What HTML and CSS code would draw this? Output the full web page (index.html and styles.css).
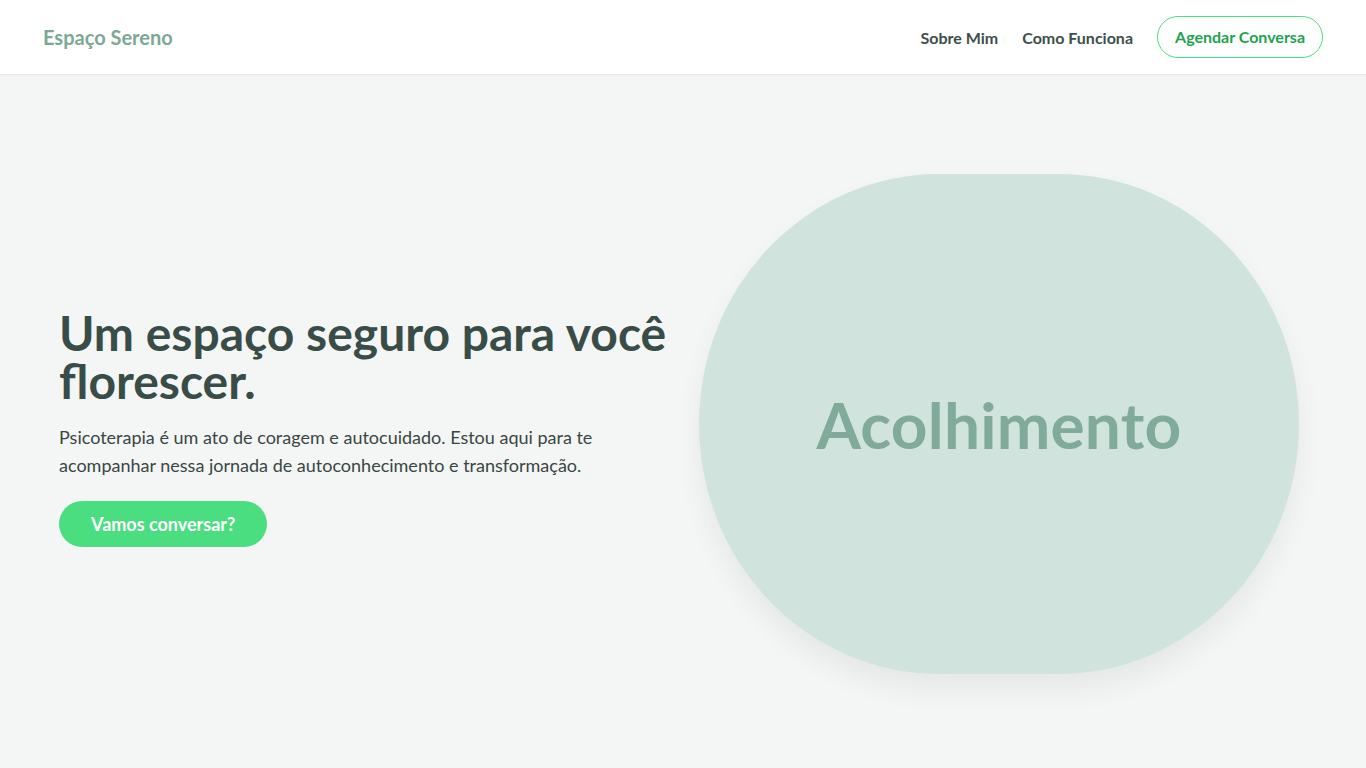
FILE: index.html
```html
<!DOCTYPE html>
<html lang="pt-BR">
<head>
<meta charset="utf-8">
<title>Espaço Sereno</title>
<link rel="stylesheet" href="styles.css">
</head>
<body>
<header class="site-header">
  <div class="container header-inner">
    <a class="logo" href="#">Espaço Sereno</a>
    <nav class="nav">
      <a class="nav-link" href="#">Sobre Mim</a>
      <a class="nav-link" href="#">Como Funciona</a>
      <a class="nav-cta" href="#">Agendar Conversa</a>
    </nav>
  </div>
</header>
<main class="hero">
  <div class="container hero-inner">
    <div class="hero-text">
      <h1 class="hero-title">Um espaço seguro para você florescer.</h1>
      <p class="hero-lead">Psicoterapia é um ato de coragem e autocuidado. Estou aqui para te acompanhar nessa jornada de autoconhecimento e transformação.</p>
      <a class="hero-btn" href="#">Vamos conversar?</a>
    </div>
    <div class="hero-visual">
      <div class="blob"><span class="blob-text">Acolhimento</span></div>
    </div>
  </div>
</main>
</body>
</html>
```

FILE: styles.css
```css
* { box-sizing: border-box; }
html, body { margin: 0; padding: 0; }
body {
  font-family: Lato, "Open Sans", sans-serif;
  background: #f4f6f5;
  color: #384d48;
}
a { text-decoration: none; }

.container {
  max-width: 1280px;
  margin: 0 auto;
}

.site-header {
  background: #ffffff;
  border-bottom: 1px solid #e6e9e8;
}
.header-inner {
  height: 74px;
  display: flex;
  align-items: center;
  justify-content: space-between;
}
.logo {
  font-size: 20px;
  font-weight: 700;
  color: #7aa996;
}
.nav {
  display: flex;
  align-items: center;
  gap: 24px;
}
.nav-link {
  font-size: 16px;
  font-weight: 700;
  color: #3d4e4a;
}
.nav-cta {
  font-size: 16px;
  font-weight: 700;
  color: #1ea34f;
  border: 1px solid #4ade80;
  border-radius: 999px;
  padding: 10px 17px;
  line-height: 20px;
}

.hero-inner {
  min-height: 694px;
  padding: 4px 16px 0;
  display: grid;
  grid-template-columns: 1fr 1fr;
  gap: 32px;
  align-items: center;
}
.hero-title {
  margin: 0 0 18px;
  font-size: 48px;
  line-height: 48px;
  font-weight: 700;
  color: #384d48;
}
.hero-lead {
  margin: 0 0 22px;
  font-size: 18px;
  line-height: 28px;
  color: #3a4644;
  max-width: 540px;
}
.hero-btn {
  display: inline-block;
  background: #4ade80;
  color: #ffffff;
  font-size: 18px;
  font-weight: 700;
  line-height: 22px;
  padding: 12px 32px;
  border-radius: 999px;
}
.hero-text {
  padding-top: 8px;
}

.hero-visual {
  display: flex;
  justify-content: flex-start;
}
.blob {
  width: 600px;
  height: 500px;
  background: #d1e3dd;
  border-radius: 40% / 50%;
  box-shadow: 0 16px 28px rgba(0, 0, 0, 0.06);
  display: flex;
  align-items: center;
  justify-content: center;
}
.blob-text {
  font-size: 64px;
  font-weight: 700;
  color: #80ab9a;
  letter-spacing: 0.2px;
}
```
